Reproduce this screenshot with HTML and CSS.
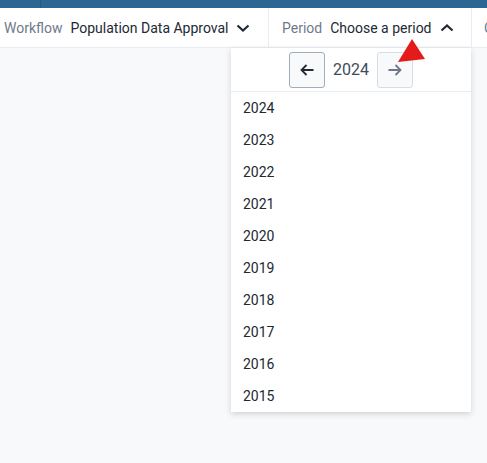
FILE: index.html
```html
<!DOCTYPE html>
<html>
<head>
<meta charset="utf-8">
<link rel="stylesheet" href="styles.css">
</head>
<body>
<div class="topbar"><div class="logo-area"></div></div>
<div class="context-bar">
  <div class="ctx ctx-workflow">
    <span class="ctx-label">Workflow</span>
    <span class="ctx-value">Population Data Approval</span>
    <svg class="chev" width="16" height="16" viewBox="0 0 16 16"><path d="M2.5 5.5 L8 10.5 L13.5 5.5" fill="none" stroke="#212934" stroke-width="2.2"/></svg>
  </div>
  <div class="ctx ctx-period">
    <span class="ctx-label">Period</span>
    <span class="ctx-value">Choose a period</span>
    <svg class="chev" width="16" height="16" viewBox="0 0 16 16"><path d="M2.5 10.5 L8 5.5 L13.5 10.5" fill="none" stroke="#212934" stroke-width="2.2"/></svg>
    <div class="dropdown">
      <div class="year-nav">
        <button class="nav-btn">
          <svg width="16" height="16" viewBox="0 0 16 16"><path d="M14.5 8 H2.5 M7.5 3 L2.5 8 L7.5 13" fill="none" stroke="#212934" stroke-width="1.8"/></svg>
        </button>
        <span class="year-current">2024</span>
        <button class="nav-btn disabled">
          <svg width="16" height="16" viewBox="0 0 16 16"><path d="M1.5 8 H13.5 M8.5 3 L13.5 8 L8.5 13" fill="none" stroke="#6c7787" stroke-width="1.8"/></svg>
        </button>
      </div>
      <ul class="year-list">
        <li>2024</li>
        <li>2023</li>
        <li>2022</li>
        <li>2021</li>
        <li>2020</li>
        <li>2019</li>
        <li>2018</li>
        <li>2017</li>
        <li>2016</li>
        <li>2015</li>
      </ul>
    </div>
  </div>
  <div class="ctx ctx-org">
    <span class="ctx-label">Org unit</span>
  </div>
</div>
<svg class="pointer" width="40" height="40" viewBox="0 0 40 40"><polygon points="15,1 1,24 28,21" fill="#e31b1b"/></svg>
</body>
</html>
```

FILE: styles.css
```css
* { box-sizing: border-box; }
html, body {
  margin: 0;
  padding: 0;
  width: 487px;
  height: 463px;
  overflow: hidden;
  background: #f8f9fa;
  font-family: Roboto, "Liberation Sans", sans-serif;
  color: #212934;
}
.topbar {
  height: 8px;
  background: #2c6693;
}
.logo-area {
  width: 41px;
  height: 8px;
  border-right: 1px solid #245a83;
}
.context-bar {
  display: flex;
  height: 40px;
  background: #fff;
  border-bottom: 1px solid #e8edf2;
  white-space: nowrap;
}
.ctx {
  display: flex;
  flex: none;
  align-items: center;
  height: 39px;
  font-size: 14px;
}
.ctx-workflow {
  width: 269px;
  padding-left: 4px;
  border-right: 1px solid #e8edf2;
}
.ctx-period {
  position: relative;
  width: 203px;
  padding-left: 13px;
  border-right: 1px solid #e8edf2;
}
.ctx-org {
  flex: 1 1 auto;
  min-width: 0;
  overflow: hidden;
  padding-left: 12px;
}
.ctx-label {
  color: #6e7a8a;
  margin-right: 8px;
}
.ctx-value {
  color: #212934;
}
.chev {
  margin-left: 6px;
}
.ctx-period .chev {
  margin-left: 7px;
}
.dropdown {
  position: absolute;
  top: 40px;
  left: -38px;
  width: 240px;
  background: #fff;
  box-shadow: 0 2px 6px rgba(33, 41, 52, 0.18);
  z-index: 5;
}
.year-nav {
  display: flex;
  justify-content: center;
  align-items: center;
  gap: 8px;
  height: 44px;
  border-bottom: 1px solid #e8edf2;
}
.nav-btn {
  display: flex;
  align-items: center;
  justify-content: center;
  width: 36px;
  height: 36px;
  padding: 0;
  background: #f8f9fa;
  border: 1px solid #a0adba;
  border-radius: 3px;
}
.nav-btn.disabled {
  border-color: #d5dde5;
}
.year-current {
  font-size: 16px;
  color: #404b5a;
  width: 36px;
  text-align: center;
}
.year-list {
  list-style: none;
  margin: 0;
  padding: 0;
}
.year-list li {
  height: 32px;
  line-height: 32px;
  padding-left: 12px;
  font-size: 14px;
  color: #212934;
}
.pointer {
  position: absolute;
  left: 397px;
  top: 38px;
  z-index: 10;
}
```
